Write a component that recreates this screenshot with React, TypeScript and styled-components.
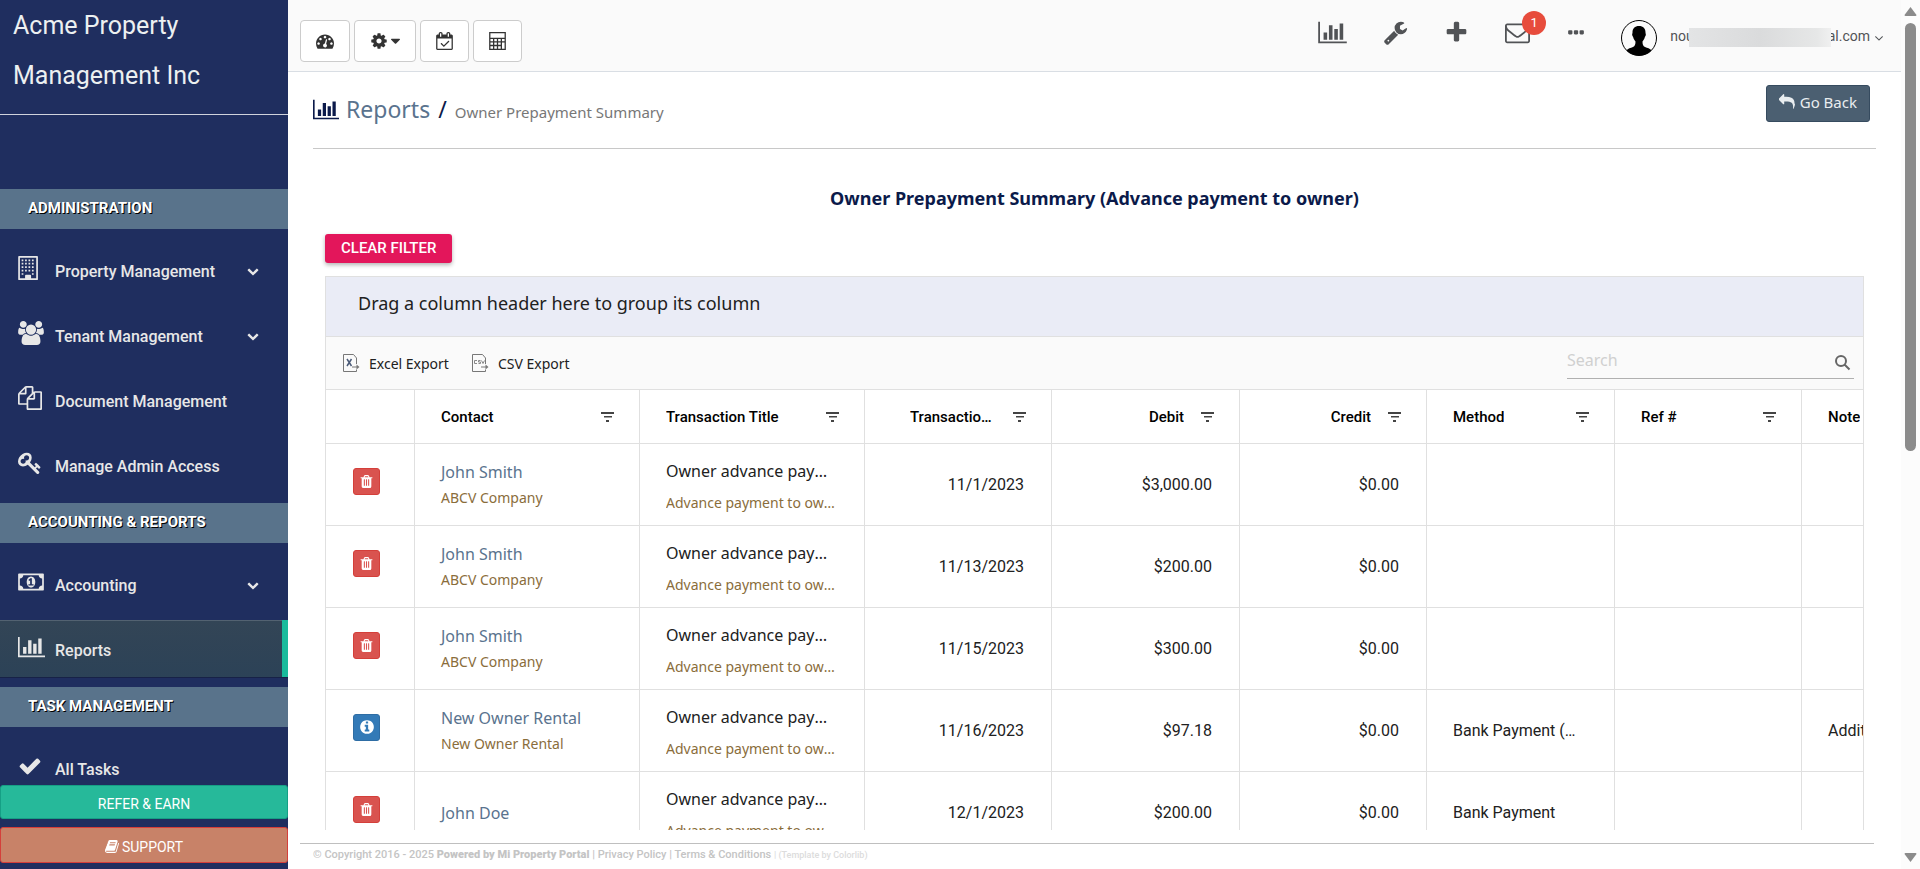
import React from "react";
import styled, { createGlobalStyle, css } from "styled-components";

const UI = '"Roboto", "Liberation Sans", sans-serif';
const HUMANIST = '"Noto Sans", "Open Sans", sans-serif';

const GlobalStyle = createGlobalStyle`
  *, *::before, *::after { box-sizing: border-box; }
  body { margin: 0; background: #fff; font-family: ${UI}; color: #212121; overflow: hidden; }
  button, input { font-family: inherit; }
  a { color: inherit; text-decoration: none; }
`;

/* ---------- icons ---------- */

type Glyph = { w: number; d: string };

const glyphs = {
  barChart: {
    w: 2048,
    d: "M640 896v512h-256v-512h256zm384-512v1024h-256v-1024h256zm1024 1152v128h-2048v-1536h128v1408h1920zm-640-896v768h-256v-768h256zm384-384v1152h-256v-1152h256z",
  },
  wrench: {
    w: 1792,
    d: "M448 1472q0-26-19-45t-45-19-45 19-19 45 19 45 45 19 45-19 19-45zm644-420l-682 682q-37 37-90 37-52 0-91-37l-106-108q-38-36-38-90 0-53 38-91l681-681q39 98 114.5 173.5t173.5 114.5zm634-435q0 39-23 106-47 134-164.5 217.5t-258.5 83.5q-185 0-316.5-131.5t-131.5-316.5 131.5-316.5 316.5-131.5q58 0 121.5 16.5t107.5 46.5q16 11 16 28t-16 28l-293 169v224l193 107q5-3 79-48.5t135.5-81 70.5-35.5q15 0 23.5 10t8.5 25z",
  },
  plus: {
    w: 1792,
    d: "M1600 736v192q0 40-28 68t-68 28h-416v416q0 40-28 68t-68 28h-192q-40 0-68-28t-28-68v-416h-416q-40 0-68-28t-28-68v-192q0-40 28-68t68-28h416v-416q0-40 28-68t68-28h192q40 0 68 28t28 68v416h416q40 0 68 28t28 68z",
  },
  envelope: {
    w: 1792,
    d: "M1664 1504v-768q-32 36-69 66-268 206-426 338-51 43-83 67t-86.5 48.5-102.5 24.5h-2q-48 0-102.5-24.5t-86.5-48.5-83-67q-158-132-426-338-37-30-69-66v768q0 13 9.5 22.5t22.5 9.5h1472q13 0 22.5-9.5t9.5-22.5zm0-1051v-24.5l-.5-13-3-12.5-5.5-9-9-7.5-14-2.5h-1472q-13 0-22.5 9.5t-9.5 22.5q0 168 147 284 193 152 401 317 6 5 35 29.5t46 37.5 44.5 31.5 50.5 27.5 43 9h2q20 0 43-9t50.5-27.5 44.5-31.5 46-37.5 35-29.5q208-165 401-317 54-43 100.5-115.5t46.5-131.5zm128-37v1088q0 66-47 113t-113 47h-1472q-66 0-113-47t-47-113v-1088q0-66 47-113t113-47h1472q66 0 113 47t47 113z",
  },
  ellipsis: {
    w: 1792,
    d: "M576 736v192q0 40-28 68t-68 28h-192q-40 0-68-28t-28-68v-192q0-40 28-68t68-28h192q40 0 68 28t28 68zm512 0v192q0 40-28 68t-68 28h-192q-40 0-68-28t-28-68v-192q0-40 28-68t68-28h192q40 0 68 28t28 68zm512 0v192q0 40-28 68t-68 28h-192q-40 0-68-28t-28-68v-192q0-40 28-68t68-28h192q40 0 68 28t28 68z",
  },
  check: {
    w: 1792,
    d: "M1671 566q0 40-28 68l-724 724-136 136q-28 28-68 28t-68-28l-136-136-362-362q-28-28-28-68t28-68l136-136q28-28 68-28t68 28l294 295 656-657q28-28 68-28t68 28l136 136q28 28 28 68z",
  },
  chevronDown: {
    w: 1792,
    d: "M1683 808l-742 741q-19 19-45 19t-45-19l-742-741q-19-19-19-45.5t19-45.5l166-165q19-19 45-19t45 19l531 531 531-531q19-19 45-19t45 19l166 165q19 19 19 45.5t-19 45.5z",
  },
  angleDown: {
    w: 1792,
    d: "M1395 736q0 13-10 23l-466 466q-10 10-23 10t-23-10l-466-466q-10-10-10-23t10-23l50-50q10-10 23-10t23 10l393 393 393-393q10-10 23-10t23 10l50 50q10 10 10 23z",
  },
  caretDown: {
    w: 1024,
    d: "M1024 704q0 26-19 45l-448 448q-19 19-45 19t-45-19l-448-448q-19-19-19-45t19-45 45-19h896q26 0 45 19t19 45z",
  },
  dashboard: {
    w: 1792,
    d: "M384 1152q0-53-37.5-90.5t-90.5-37.5-90.5 37.5-37.5 90.5 37.5 90.5 90.5 37.5 90.5-37.5 37.5-90.5zm192-448q0-53-37.5-90.5t-90.5-37.5-90.5 37.5-37.5 90.5 37.5 90.5 90.5 37.5 90.5-37.5 37.5-90.5zm428 481l101-382q6-26-7.5-48.5t-38.5-29.5-48 6.5-30 39.5l-101 382q-60 5-107 43.5t-63 98.5q-20 77 20 146t117 89 146-20 89-117q16-60-6-117t-72-91zm660-33q0-53-37.5-90.5t-90.5-37.5-90.5 37.5-37.5 90.5 37.5 90.5 90.5 37.5 90.5-37.5 37.5-90.5zm-640-640q0-53-37.5-90.5t-90.5-37.5-90.5 37.5-37.5 90.5 37.5 90.5 90.5 37.5 90.5-37.5 37.5-90.5zm448 192q0-53-37.5-90.5t-90.5-37.5-90.5 37.5-37.5 90.5 37.5 90.5 90.5 37.5 90.5-37.5 37.5-90.5zm320 448q0 261-141 483-19 29-54 29h-1402q-35 0-54-29-141-221-141-483 0-182 71-348t191-286 286-191 348-71 348 71 286 191 191 286 71 348z",
  },
  cog: {
    w: 1792,
    d: "M1152 896q0-106-75-181t-181-75-181 75-75 181 75 181 181 75 181-75 75-181zm512-109v222q0 12-8 23t-20 13l-185 28q-19 54-39 91 35 50 107 138 10 12 10 25t-9 23q-27 37-99 108t-94 71q-12 0-26-9l-138-108q-44 23-91 38-16 136-29 186-7 28-36 28h-222q-14 0-24.5-8.5t-11.5-21.5l-28-184q-49-16-90-37l-141 107q-10 9-25 9-14 0-25-11-126-114-165-168-7-10-7-23 0-12 8-23 15-21 51-66.5t54-70.5q-27-50-41-99l-183-27q-13-2-21-12.5t-8-23.5v-222q0-12 8-23t19-13l186-28q14-46 39-92-40-57-107-138-10-12-10-24 0-10 9-23 26-36 98.5-107.5t94.5-71.5q13 0 26 10l138 107q44-23 91-38 16-136 29-186 7-28 36-28h222q14 0 24.5 8.5t11.5 21.5l28 184q49 16 90 37l142-107q9-9 24-9 13 0 25 10 129 119 165 170 7 8 7 22 0 12-8 23-15 21-51 66.5t-54 70.5q26 50 41 98l183 28q13 2 21 12.5t8 23.5z",
  },
  calendarCheck: {
    w: 1664,
    d: "M1303 964l-512 512q-10 9-23 9t-23-9l-288-288q-9-10-9-23t9-22l46-46q9-9 22-9t23 9l220 220 444-444q10-9 23-9t22 9l46 46q9 9 9 22t-9 23zm-1175 700h1408v-1024h-1408v1024zm384-1216v-288q0-14-9-23t-23-9h-64q-14 0-23 9t-9 23v288q0 14 9 23t23 9h64q14 0 23-9t9-23zm768 0v-288q0-14-9-23t-23-9h-64q-14 0-23 9t-9 23v288q0 14 9 23t23 9h64q14 0 23-9t9-23zm384-64v1280q0 52-38 90t-90 38h-1408q-52 0-90-38t-38-90v-1280q0-52 38-90t90-38h128v-96q0-66 47-113t113-47h64q66 0 113 47t47 113v96h384v-96q0-66 47-113t113-47h64q66 0 113 47t47 113v96h128q52 0 90 38t38 90z",
  },
  calculator: {
    w: 1664,
    d: "M0 0h1664v1792h-1664zM128 128v448h1408v-448zM128 704v224h256v-224zM512 704v224h256v-224zM896 704v224h256v-224zM1280 704v224h256v-224zM128 1056v224h256v-224zM512 1056v224h256v-224zM896 1056v224h256v-224zM128 1408v256h256v-256zM512 1408v256h256v-256zM896 1408v256h256v-256zM1280 1056v608h256v-608z",
  },
  building: {
    w: 1536,
    d: "M64 0h1344q64 0 64 64v1664q0 64-64 64h-1344q-64 0-64-64v-1664q0-64 64-64zM128 128v1536h384v-192q0-64 64-64h320q64 0 64 64v192h384v-1536zM256 256h128v128h-128zM512 256h128v128h-128zM768 256h128v128h-128zM1024 256h128v128h-128zM256 512h128v128h-128zM512 512h128v128h-128zM768 512h128v128h-128zM1024 512h128v128h-128zM256 768h128v128h-128zM512 768h128v128h-128zM768 768h128v128h-128zM1024 768h128v128h-128zM256 1024h128v128h-128zM512 1024h128v128h-128zM768 1024h128v128h-128zM1024 1024h128v128h-128zM256 1280h128v128h-128zM1024 1280h128v128h-128z",
  },
  users: {
    w: 1920,
    d: "M593 896q-162 5-265 128h-134q-82 0-138-40.5t-56-118.5q0-353 124-353 6 0 43.5 21t97.5 42.5 119 21.5q67 0 133-23-5 37-5 66 0 139 81 256zm1071 637q0 120-73 189.5t-194 69.5h-874q-121 0-194-69.5t-73-189.5q0-53 3.5-103.5t14-109 26.5-108.5 43-97.5 62-81 85.5-53.5 111.5-20q10 0 43 21.5t73 48 107 48 135 21.5 135-21.5 107-48 73-48 43-21.5q61 0 111.5 20t85.5 53.5 62 81 43 97.5 26.5 108.5 14 109 3.5 103.5zm-1024-1277q0 106-75 181t-181 75-181-75-75-181 75-181 181-75 181 75 75 181zm704 384q0 159-112.5 271.5t-271.5 112.5-271.5-112.5-112.5-271.5 112.5-271.5 271.5-112.5 271.5 112.5 112.5 271.5zm576 225q0 78-56 118.5t-138 40.5h-134q-103-123-265-128 81-117 81-256 0-29-5-66 66 23 133 23 59 0 119-21.5t97.5-42.5 43.5-21q124 0 124 353zm-128-609q0 106-75 181t-181 75-181-75-75-181 75-181 181-75 181 75 75 181z",
  },
  files: {
    w: 1792,
    d: "M1696 384q40 0 68 28t28 68v1216q0 40-28 68t-68 28h-960q-40 0-68-28t-28-68v-288h-544q-40 0-68-28t-28-68v-672q0-40 20-88t48-76l408-408q28-28 76-48t88-20h416q40 0 68 28t28 68v328q68-40 128-40h416zm-544 213l-299 299h299v-299zm-640-384l-299 299h299v-299zm196 647l316-316v-416h-384v416q0 40-28 68t-68 28h-416v640h512v-256q0-40 20-88t48-76zm956 804v-1152h-384v416q0 40-28 68t-68 28h-416v640h896z",
  },
  key: {
    w: 1792,
    d: "M832 512q0-80-56-136t-136-56-136 56-56 136q0 42 19 83-41-19-83-19-80 0-136 56t-56 136 56 136 136 56 136-56 56-136q0-42-19-83 41 19 83 19 80 0 136-56t56-136zm851 704q0 17-49 66t-66 49q-9 0-28.5-16t-36.5-33-38.5-40-24.5-26l-96 96 220 220q28 28 28 68 0 42-39 81t-81 39q-40 0-68-28l-671-671q-176 131-365 131-163 0-265.5-102.5t-102.5-265.5q0-160 95-313t248-248 313-95q163 0 265.5 102.5t102.5 265.5q0 189-131 365l355 355 96-96q-3-3-26-24.5t-40-38.5-33-36.5-16-28.5q0-17 49-66t66-49q13 0 23 10 6 6 46 44.5t82 79.5 86.5 86 73 78 28.5 41z",
  },
  money: {
    w: 1920,
    d: "M768 1152h384v-96h-128v-448h-114l-148 137 77 80q42-37 55-57h2v288h-128v96zm512-256q0 70-21 142t-59.5 134-101.5 101-138 39-138-39-101.5-101-59.5-134-21-142 21-142 59.5-134 101.5-101 138-39 138 39 101.5 101 59.5 134 21 142zm512 256v-512q-106 0-181-75t-75-181h-1152q0 106-75 181t-181 75v512q106 0 181 75t75 181h1152q0-106 75-181t181-75zm128-832v1152q0 26-19 45t-45 19h-1792q-26 0-45-19t-19-45v-1152q0-26 19-45t45-19h1792q26 0 45 19t19 45z",
  },
  reply: {
    w: 1792,
    d: "M1792 1120q0 166-127 451-3 7-10.5 24t-13.5 30-13 22q-12 17-28 17-15 0-23.5-10t-8.5-25q0-9 2.5-26.5t2.5-23.5q5-68 5-123 0-112-19.5-200.5t-54-153.5-89-112-115.5-79.5-144-49-163.5-20-183.5-8h-224v256q0 26-19 45t-45 19-45-19l-512-512q-19-19-19-45t19-45l512-512q19-19 45-19t45 19 19 45v256h224q713 0 875 403 53 134 53 333z",
  },
  book: {
    w: 1664,
    d: "M1639 478q40 57 18 129l-275 906q-19 64-76.5 107.5t-122.5 43.5h-923q-77 0-148.5-53.5t-99.5-131.5q-24-67-2-127 0-4 3-27t4-37q1-8-3-21.5t-3-19.5q2-11 8-21t16.5-23.5 16.5-23.5q23-38 45-91.5t30-91.5q3-10 .5-30t-.5-28q3-11 17-28t17-23q21-36 42-92t25-90q1-9-2.5-32t.5-28q4-13 22-30.5t22-22.5q19-26 42.5-84.5t27.5-96.5q1-8-3-25.5t-2-26.5q2-8 9-18t18-23 17-21q8-12 16.5-30.5t15-35 16-36 19.5-32 26.5-23.5 36-11.5 47.5 5.5l-1 3q38-9 51-9h761q74 0 114 56t18 130l-274 906q-36 119-71.5 153.5t-128.5 34.5h-869q-27 0-38 15-11 16-1 43 24 70 144 70h923q29 0 56-15.5t35-41.5l300-987q7-22 5-57 38 15 59 43zm-1064 2q-4 13 2 22.5t20 9.5h608q13 0 25.5-9.5t16.5-22.5l21-64q4-13-2-22.5t-20-9.5h-608q-13 0-25.5 9.5t-16.5 22.5zm-83 256q-4 13 2 22.5t20 9.5h608q13 0 25.5-9.5t16.5-22.5l21-64q4-13-2-22.5t-20-9.5h-608q-13 0-25.5 9.5t-16.5 22.5z",
  },
  trash: {
    w: 1792,
    d: "M704 1376v-704q0-14-9-23t-23-9h-64q-14 0-23 9t-9 23v704q0 14 9 23t23 9h64q14 0 23-9t9-23zm256 0v-704q0-14-9-23t-23-9h-64q-14 0-23 9t-9 23v704q0 14 9 23t23 9h64q14 0 23-9t9-23zm256 0v-704q0-14-9-23t-23-9h-64q-14 0-23 9t-9 23v704q0 14 9 23t23 9h64q14 0 23-9t9-23zm-544-992h448l-48-117q-7-9-17-11h-317q-10 2-17 11zm928 32v64q0 14-9 23t-23 9h-96v948q0 83-47 143.5t-113 60.5h-832q-66 0-113-58.5t-47-141.5v-952h-96q-14 0-23-9t-9-23v-64q0-14 9-23t23-9h309l70-167q15-37 54-63t79-26h320q40 0 79 26t54 63l70 167h309q14 0 23 9t9 23z",
  },
  info: {
    w: 1792,
    d: "M1152 1376v-160q0-14-9-23t-23-9h-96v-512q0-14-9-23t-23-9h-320q-14 0-23 9t-9 23v160q0 14 9 23t23 9h96v320h-96q-14 0-23 9t-9 23v160q0 14 9 23t23 9h448q14 0 23-9t9-23zm-128-896v-160q0-14-9-23t-23-9h-192q-14 0-23 9t-9 23v160q0 14 9 23t23 9h192q14 0 23-9t9-23zm640 416q0 209-103 385.5t-279.5 279.5-385.5 103-385.5-103-279.5-279.5-103-385.5 103-385.5 279.5-279.5 385.5-103 385.5 103 279.5 279.5 103 385.5z",
  },
} satisfies Record<string, Glyph>;

type IconName = keyof typeof glyphs;

const Svg = styled.svg`
  display: block;
  flex: none;
  fill: currentColor;
`;

function Icon({ name, size }: { name: IconName; size: number }) {
  const g = glyphs[name];
  return (
    <Svg
      viewBox={`0 0 ${g.w} 1792`}
      height={size}
      width={Math.round((g.w / 1792) * size)}
      fillRule="evenodd"
      aria-hidden="true"
    >
      <path d={g.d} />
    </Svg>
  );
}

function FilterIcon() {
  return (
    <Svg width="13" height="10" viewBox="0 0 13 10" aria-hidden="true">
      <path d="M0 0h13v2H0zM3 4h8v1.500H3zM5 8h3v2H5z" />
    </Svg>
  );
}

function SearchIcon() {
  return (
    <Svg width="16" height="16" viewBox="0 0 16 16" aria-hidden="true">
      <path
        d="M6 11a5 5 0 1 1 0-10 5 5 0 0 1 0 10zM9.500 9.500l5 5"
        fill="none"
        stroke="currentColor"
        strokeWidth="2"
      />
    </Svg>
  );
}

function ExcelIcon() {
  return (
    <Svg width="17" height="18" viewBox="0 0 17 18" aria-hidden="true">
      <path d="M13.500 10V4l-3-3.500H.5v17h13V15.500" fill="none" stroke="#777" />
      <path d="M4 5l4.500 7M8.500 5L4 12" fill="none" stroke="#4b5b78" strokeWidth="1.500" />
      <path d="M9 12.500h4.500v-2l3 2.500-3 2.500v-2H9z" fill="#777" />
    </Svg>
  );
}

function CsvIcon() {
  return (
    <Svg width="17" height="18" viewBox="0 0 17 18" aria-hidden="true">
      <path d="M13.500 10V4l-3-3.500H.5v17h13V15.500" fill="none" stroke="#777" />
      <path
        d="M5 6.500H2.500v3H5M8.500 6.500H6.500v1.500h2v1.500h-2M9.500 6.500l1.500 3 1.500-3"
        fill="none"
        stroke="#888"
      />
      <path d="M9 12.500h4.500v-2l3 2.500-3 2.500v-2H9z" fill="#777" />
    </Svg>
  );
}

function Silhouette() {
  return (
    <Svg width="36" height="36" viewBox="0 0 36 36" aria-hidden="true">
      <circle cx="18" cy="18" r="17.500" fill="#fafafa" stroke="#000" />
      <path
        fill="#000"
        d="M18 6c4.200 0 6.500 2.600 6.500 6.500 0 1 .5 1.300.3 2.600-.2 1.100-.8 1.400-1 2.200-.4 1.700-1.300 3.200-2.300 4.200 0 3 .6 4.600 2.500 5.600 2.400 1.200 5 1.300 6.600 3.400A17.500 17.500 0 0 1 18 35.500 17.500 17.500 0 0 1 5.400 30.500c1.600-2.100 4.200-2.200 6.600-3.400 1.900-1 2.500-2.600 2.500-5.600-1-1-1.900-2.500-2.300-4.200-.2-.8-.8-1.100-1-2.200-.2-1.300.3-1.600.3-2.600C11.500 8.600 13.800 6 18 6z"
      />
    </Svg>
  );
}

/* ---------- page frame ---------- */

const Page = styled.div`
  display: flex;
  height: 100vh;
`;

const Main = styled.main`
  flex: 1;
  min-width: 0;
  display: flex;
  flex-direction: column;
`;

const Content = styled.div`
  flex: 1;
  min-height: 0;
  overflow: hidden;
  padding: 0 25px;
`;

const ScrollTrack = styled.div`
  flex: none;
  width: 19px;
  padding: 7px 0;
  display: flex;
  flex-direction: column;
  align-items: center;
  gap: 7px;
  background: #fcfcfc;
  color: #8b8b8b;
`;

const ThumbLane = styled.div`
  flex: 1;
  min-height: 0;
`;

const Thumb = styled.div`
  width: 11px;
  height: 52%;
  border-radius: 6px;
  background: #8b8b8b;
`;

function Scrollbar() {
  return (
    <ScrollTrack aria-hidden="true">
      <Svg width="13" height="9" viewBox="0 0 13 9">
        <path d="M6.500 0L12.500 8q0 1-1 1h-10q-1 0-1-1z" />
      </Svg>
      <ThumbLane>
        <Thumb />
      </ThumbLane>
      <Svg width="13" height="9" viewBox="0 0 13 9">
        <path d="M6.500 9L12.500 1q0-1-1-1h-10q-1 0-1 1z" />
      </Svg>
    </ScrollTrack>
  );
}

/* ---------- sidebar ---------- */

const Sidebar = styled.aside`
  flex: none;
  width: 288px;
  display: flex;
  flex-direction: column;
  background: #1f2e5f;
  color: #e7e7e7;
`;

const Brand = styled.a`
  height: 115px;
  padding: 1px 60px 0 13px;
  border-bottom: 1px solid #d0d3dc;
  font-size: 25px;
  line-height: 50px;
  color: #ecf0f1;
`;

const Nav = styled.nav`
  flex: 1;
  min-height: 0;
  overflow: hidden;
  padding-top: 64px;
`;

const SectionTitle = styled.h3`
  height: 40px;
  margin: 10px 0 12px;
  padding-left: 28px;
  background: #59738b;
  color: #fff;
  font-size: 15px;
  font-weight: 700;
  line-height: 39px;
  text-transform: uppercase;
  text-shadow: 1px 1px #000;
`;

const NavList = styled.ul`
  display: flex;
  flex-direction: column;
  gap: 8px;
  margin: 0;
  padding: 0;
  list-style: none;
`;

const NavLink = styled.a<{ $active?: boolean }>`
  display: grid;
  grid-template-columns: 37px 1fr 12px;
  align-items: center;
  height: 57px;
  padding: 3px 29px 0 18px;
  font-size: 16px;
  font-weight: 500;
  ${(p) =>
    p.$active &&
    css`
      padding-right: 23px;
      border-right: 6px solid #1abb9c;
      background: linear-gradient(#334556, #2c4257);
      box-shadow: rgba(0, 0, 0, 0.25) 0 1px 0, inset rgba(255, 255, 255, 0.16) 0 1px 0;
    `}
`;

const NavIcon = styled.span`
  padding-bottom: 6px;
`;

const SidebarFooter = styled.div`
  display: flex;
  flex-direction: column;
  gap: 8px;
  padding-bottom: 6px;
`;

const FooterButton = styled.button<{ $tone: "green" | "clay" }>`
  display: flex;
  align-items: center;
  justify-content: center;
  gap: 3px;
  height: ${(p) => (p.$tone === "green" ? 34 : 36)}px;
  padding-top: 4px;
  border: 1px solid ${(p) => (p.$tone === "green" ? "#169f85" : "#d43f3a")};
  border-radius: 3px;
  background: ${(p) => (p.$tone === "green" ? "#26b99a" : "#c88268")};
  color: #fff;
  font-size: 14px;
`;

type NavItem = { label: string; icon: IconName; more?: boolean; active?: boolean };

const sections: { title: string; items: NavItem[] }[] = [
  {
    title: "Administration",
    items: [
      { label: "Property Management", icon: "building", more: true },
      { label: "Tenant Management", icon: "users", more: true },
      { label: "Document Management", icon: "files" },
      { label: "Manage Admin Access", icon: "key" },
    ],
  },
  {
    title: "Accounting & Reports",
    items: [
      { label: "Accounting", icon: "money", more: true },
      { label: "Reports", icon: "barChart", active: true },
    ],
  },
  {
    title: "Task Management",
    items: [{ label: "All Tasks", icon: "check" }],
  },
];

function SideNav() {
  return (
    <Sidebar>
      <Brand href="#">Acme Property Management Inc</Brand>
      <Nav>
        {sections.map((s) => (
          <React.Fragment key={s.title}>
            <SectionTitle>{s.title}</SectionTitle>
            <NavList>
              {s.items.map((i) => (
                <li key={i.label}>
                  <NavLink href="#" $active={i.active}>
                    <NavIcon>
                      <Icon name={i.icon} size={24} />
                    </NavIcon>
                    {i.label}
                    {i.more && <Icon name="chevronDown" size={12} />}
                  </NavLink>
                </li>
              ))}
            </NavList>
          </React.Fragment>
        ))}
      </Nav>
      <SidebarFooter>
        <FooterButton $tone="green">REFER &amp; EARN</FooterButton>
        <FooterButton $tone="clay">
          <Icon name="book" size={15} />
          SUPPORT
        </FooterButton>
      </SidebarFooter>
    </Sidebar>
  );
}

/* ---------- top bar ---------- */

const TopBar = styled.header`
  flex: none;
  display: flex;
  align-items: center;
  justify-content: space-between;
  height: 72px;
  padding: 0 15px 0 12px;
  border-bottom: 1px solid #d9dee4;
  background: #fafafa;
`;

const Tools = styled.div`
  display: flex;
  gap: 4px;
  padding-top: 11px;
`;

const ToolButton = styled.button`
  display: flex;
  align-items: center;
  justify-content: center;
  gap: 3px;
  height: 42px;
  padding: 0 15px;
  border: 1px solid #ccc;
  border-radius: 4px;
  background: #fff;
  color: #333;
`;

const TopRight = styled.div`
  display: flex;
  align-items: center;
  gap: 35px;
`;

const Shortcuts = styled.div`
  display: flex;
  align-items: center;
  gap: 36px;
  padding-bottom: 6px;
`;

const Shortcut = styled.button`
  position: relative;
  padding: 0;
  border: 0;
  background: none;
  color: #515356;
`;

const Badge = styled.span`
  position: absolute;
  top: -9px;
  right: -16px;
  width: 24px;
  height: 24px;
  border-radius: 50%;
  background: #e74c3c;
  color: #fff;
  font-size: 13px;
  line-height: 24px;
  text-align: center;
`;

const Account = styled.button`
  display: flex;
  align-items: center;
  margin-top: 5px;
  padding: 0;
  border: 0;
  background: none;
  color: #515356;
  font-size: 14px;
`;

const AccountName = styled.span`
  display: flex;
  align-items: center;
  padding: 0 2px 4px 13px;
`;

const Redaction = styled.span`
  position: relative;
  width: 142px;
  height: 19px;
  margin: 2px -3px 0 -5px;
  background: linear-gradient(90deg, #e3e4e5, #dadbdc 50%, #e6e7e7 90%, #f0f0f0);
`;

const shortcutIcons: { name: IconName; label: string; size: number; badge?: number }[] = [
  { name: "barChart", label: "Reports", size: 25 },
  { name: "wrench", label: "Maintenance", size: 25 },
  { name: "plus", label: "Add", size: 25 },
  { name: "envelope", label: "Messages", size: 25, badge: 1 },
  { name: "ellipsis", label: "More", size: 20 },
];

function Header() {
  return (
    <TopBar>
      <Tools>
        <ToolButton aria-label="Dashboard">
          <Icon name="dashboard" size={18} />
        </ToolButton>
        <ToolButton aria-label="Settings">
          <Icon name="cog" size={18} />
          <Icon name="caretDown" size={16} />
        </ToolButton>
        <ToolButton aria-label="Calendar">
          <Icon name="calendarCheck" size={18} />
        </ToolButton>
        <ToolButton aria-label="Calculator">
          <Icon name="calculator" size={18} />
        </ToolButton>
      </Tools>
      <TopRight>
        <Shortcuts>
          {shortcutIcons.map((s) => (
            <Shortcut key={s.label} aria-label={s.label}>
              <Icon name={s.name} size={s.size} />
              {s.badge && <Badge>{s.badge}</Badge>}
            </Shortcut>
          ))}
        </Shortcuts>
        <Account>
          <Silhouette />
          <AccountName>
            nou
            <Redaction />
            al.com
          </AccountName>
          <Icon name="angleDown" size={14} />
        </Account>
      </TopRight>
    </TopBar>
  );
}

/* ---------- page heading ---------- */

const TitleBar = styled.div`
  display: flex;
  align-items: flex-start;
  justify-content: space-between;
  padding: 13px 6px 22px 0;
  border-bottom: 1px solid #c8c8c8;
`;

const Crumbs = styled.h1`
  display: flex;
  align-items: baseline;
  gap: 8px;
  height: 41px;
  margin: 0;
  color: #0b1a4a;
  font-family: ${HUMANIST};
  font-size: 23px;
  font-weight: 400;
  line-height: 48px;
`;

const CrumbLink = styled.a`
  color: #5a738e;

  svg {
    display: inline-block;
    margin-right: 7px;
    vertical-align: -3px;
    color: #0b1a4a;
  }
`;

const CrumbHere = styled.small`
  color: #777;
  font-size: 15px;
`;

const BackButton = styled.button`
  display: flex;
  align-items: center;
  gap: 5px;
  height: 37px;
  padding: 0 12px 3px;
  border: 1px solid #364b5f;
  border-radius: 3px;
  background: #4b5f71;
  color: #e9edef;
  font-family: ${HUMANIST};
  font-size: 15px;
`;

const Report = styled.section`
  padding: 0 12px;
`;

const ReportTitle = styled.h2`
  margin: 37px 0 24px;
  color: #0b1a4a;
  font-family: ${HUMANIST};
  font-size: 18px;
  font-weight: 700;
  line-height: 24px;
  text-align: center;
`;

const ClearButton = styled.button`
  display: block;
  height: 29px;
  margin-bottom: 13px;
  padding: 0 16px;
  border: 0;
  border-radius: 3px;
  background: #e3165b;
  box-shadow: 0 2px 4px rgba(0, 0, 0, 0.3);
  color: #fff;
  font-size: 15px;
  font-weight: 500;
  line-height: 27px;
`;

/* ---------- data grid ---------- */

const Grid = styled.div`
  overflow: hidden;
  border: 1px solid #e0e0e0;
`;

const GroupDrop = styled.div`
  height: 60px;
  padding-left: 32px;
  border-bottom: 1px solid #e0e0e0;
  background: #eaecf6;
  font-family: ${HUMANIST};
  font-size: 18px;
  line-height: 53px;
`;

const Toolbar = styled.div`
  display: flex;
  align-items: center;
  gap: 23px;
  height: 53px;
  padding: 0 9px 0 17px;
  border-bottom: 1px solid #e0e0e0;
  background: #fafafa;
  font-family: ${HUMANIST};
`;

const ExportButton = styled.button`
  display: flex;
  align-items: center;
  gap: 9px;
  padding: 0;
  border: 0;
  background: none;
  color: #212121;
  font-size: 14px;
`;

const SearchBox = styled.label`
  display: flex;
  align-items: center;
  align-self: flex-end;
  width: 287px;
  height: 32px;
  margin: 0 0 10px auto;
  padding-right: 3px;
  border-bottom: 1px solid #b0b0b0;
  color: #666;

  input {
    flex: 1;
    min-width: 0;
    padding: 0 0 5px;
    border: 0;
    outline: 0;
    background: none;
    font-size: 16px;
  }

  input::placeholder {
    color: #d0d0d0;
  }
`;

const Table = styled.table`
  width: 1684px;
  table-layout: fixed;
  border-collapse: separate;
  border-spacing: 0;
`;

const cellEdges = css`
  border-bottom: 1px solid #e0e0e0;
  border-right: 1px solid #e0e0e0;
`;

const Th = styled.th<{ $right?: boolean }>`
  ${cellEdges}
  height: 54px;
  padding: 0 25px 0 ${(p) => (p.$right ? 45 : 26)}px;
  color: #000;
  font-size: 15px;
  font-weight: 500;
`;

const HeadCell = styled.div<{ $right?: boolean }>`
  display: flex;
  align-items: center;
  justify-content: ${(p) => (p.$right ? "flex-end" : "space-between")};
  gap: 17px;

  span {
    overflow: hidden;
    text-overflow: ellipsis;
    white-space: nowrap;
  }

  svg {
    color: #444;
  }
`;

const Td = styled.td<{ $right?: boolean }>`
  ${cellEdges}
  height: 82px;
  padding: 0 ${(p) => (p.$right ? 27 : 26)}px 0 26px;
  overflow: hidden;
  text-overflow: ellipsis;
  white-space: nowrap;
  font-size: 16px;
  text-align: ${(p) => (p.$right ? "right" : "left")};
`;

const ActionCell = styled(Td)`
  padding: 0 27px;
`;

const RowAction = styled.button<{ $info?: boolean }>`
  display: flex;
  align-items: center;
  justify-content: center;
  width: 27px;
  height: 27px;
  margin-bottom: 7px;
  padding: 0;
  border: 1px solid ${(p) => (p.$info ? "#2e6da4" : "#d43f3a")};
  border-radius: 3px;
  background: ${(p) => (p.$info ? "#337ab7" : "#d9534f")};
  color: #fff;
`;

const ContactName = styled.a`
  display: block;
  color: #5a738e;
  font-family: ${HUMANIST};
  font-size: 16px;
  line-height: 26px;
`;

const Company = styled.div`
  color: #8a6d3b;
  font-family: ${HUMANIST};
  font-size: 14px;
  line-height: 26px;
`;

const Entry = styled.div`
  padding-top: 5px;
`;

const EntryTitle = styled.div<{ $sub?: boolean }>`
  overflow: hidden;
  text-overflow: ellipsis;
  color: ${(p) => (p.$sub ? "#8a6d3b" : "#212121")};
  font-family: ${HUMANIST};
  font-size: ${(p) => (p.$sub ? 14 : 16)}px;
  line-height: 31px;
`;

const columns: { label: string; width: number; right?: boolean }[] = [
  { label: "Contact", width: 225 },
  { label: "Transaction Title", width: 225 },
  { label: "Transaction Date", width: 187, right: true },
  { label: "Debit", width: 188, right: true },
  { label: "Credit", width: 187, right: true },
  { label: "Method", width: 188 },
  { label: "Ref #", width: 187 },
  { label: "Note", width: 208 },
];

type Row = {
  info?: boolean;
  name: string;
  company?: string;
  date: string;
  debit: string;
  method?: string;
  note?: string;
};

const rows: Row[] = [
  { name: "John Smith", company: "ABCV Company", date: "11/1/2023", debit: "$3,000.00" },
  { name: "John Smith", company: "ABCV Company", date: "11/13/2023", debit: "$200.00" },
  { name: "John Smith", company: "ABCV Company", date: "11/15/2023", debit: "$300.00" },
  {
    info: true,
    name: "New Owner Rental",
    company: "New Owner Rental",
    date: "11/16/2023",
    debit: "$97.18",
    method: "Bank Payment (Manual)",
    note: "Additional",
  },
  { name: "John Doe", date: "12/1/2023", debit: "$200.00", method: "Bank Payment" },
];

function DataGrid() {
  return (
    <Grid>
      <GroupDrop>Drag a column header here to group its column</GroupDrop>
      <Toolbar>
        <ExportButton>
          <ExcelIcon />
          Excel Export
        </ExportButton>
        <ExportButton>
          <CsvIcon />
          CSV Export
        </ExportButton>
        <SearchBox>
          <input type="text" placeholder="Search" aria-label="Search" />
          <SearchIcon />
        </SearchBox>
      </Toolbar>
      <Table>
        <colgroup>
          <col width={89} />
          {columns.map((c) => (
            <col key={c.label} width={c.width} />
          ))}
        </colgroup>
        <thead>
          <tr>
            <Th aria-label="Actions" />
            {columns.map((c) => (
              <Th key={c.label} $right={c.right}>
                <HeadCell $right={c.right}>
                  <span>{c.label}</span>
                  <FilterIcon />
                </HeadCell>
              </Th>
            ))}
          </tr>
        </thead>
        <tbody>
          {rows.map((r) => (
            <tr key={r.date}>
              <ActionCell>
                <RowAction $info={r.info} aria-label={r.info ? "Details" : "Delete"}>
                  <Icon name={r.info ? "info" : "trash"} size={r.info ? 16 : 15} />
                </RowAction>
              </ActionCell>
              <Td>
                <ContactName href="#">{r.name}</ContactName>
                {r.company && <Company>{r.company}</Company>}
              </Td>
              <Td>
                <Entry>
                  <EntryTitle>Owner advance payment</EntryTitle>
                  <EntryTitle $sub>Advance payment to owner</EntryTitle>
                </Entry>
              </Td>
              <Td $right>{r.date}</Td>
              <Td $right>{r.debit}</Td>
              <Td $right>$0.00</Td>
              <Td>{r.method}</Td>
              <Td />
              <Td>{r.note}</Td>
            </tr>
          ))}
        </tbody>
      </Table>
    </Grid>
  );
}

/* ---------- footer ---------- */

const PageFooter = styled.footer`
  flex: none;
  height: 26px;
  margin: 13px 27px 0 12px;
  padding-left: 13px;
  border-top: 1px solid #bfbfbf;
  color: #c4c4c4;
  font-size: 11px;
  font-weight: 500;
  line-height: 22px;

  b {
    font-weight: 900;
  }

  small {
    color: #dcdcdc;
    font-size: 9px;
  }
`;

export default function App() {
  return (
    <Page>
      <GlobalStyle />
      <SideNav />
      <Main>
        <Header />
        <Content>
          <TitleBar>
            <Crumbs>
              <CrumbLink href="#">
                <Icon name="barChart" size={23} />
                Reports
              </CrumbLink>
              <span>/</span>
              <CrumbHere>Owner Prepayment Summary</CrumbHere>
            </Crumbs>
            <BackButton>
              <Icon name="reply" size={16} />
              Go Back
            </BackButton>
          </TitleBar>
          <Report>
            <ReportTitle>Owner Prepayment Summary (Advance payment to owner)</ReportTitle>
            <ClearButton>CLEAR FILTER</ClearButton>
            <DataGrid />
          </Report>
        </Content>
        <PageFooter>
          © Copyright 2016 - 2025 <b>Powered by Mi Property Portal</b> | <a href="#">Privacy Policy</a> |{" "}
          <a href="#">Terms &amp; Conditions</a> <small>| (Template by <a href="#">Colorlib</a>)</small>
        </PageFooter>
      </Main>
      <Scrollbar />
    </Page>
  );
}
